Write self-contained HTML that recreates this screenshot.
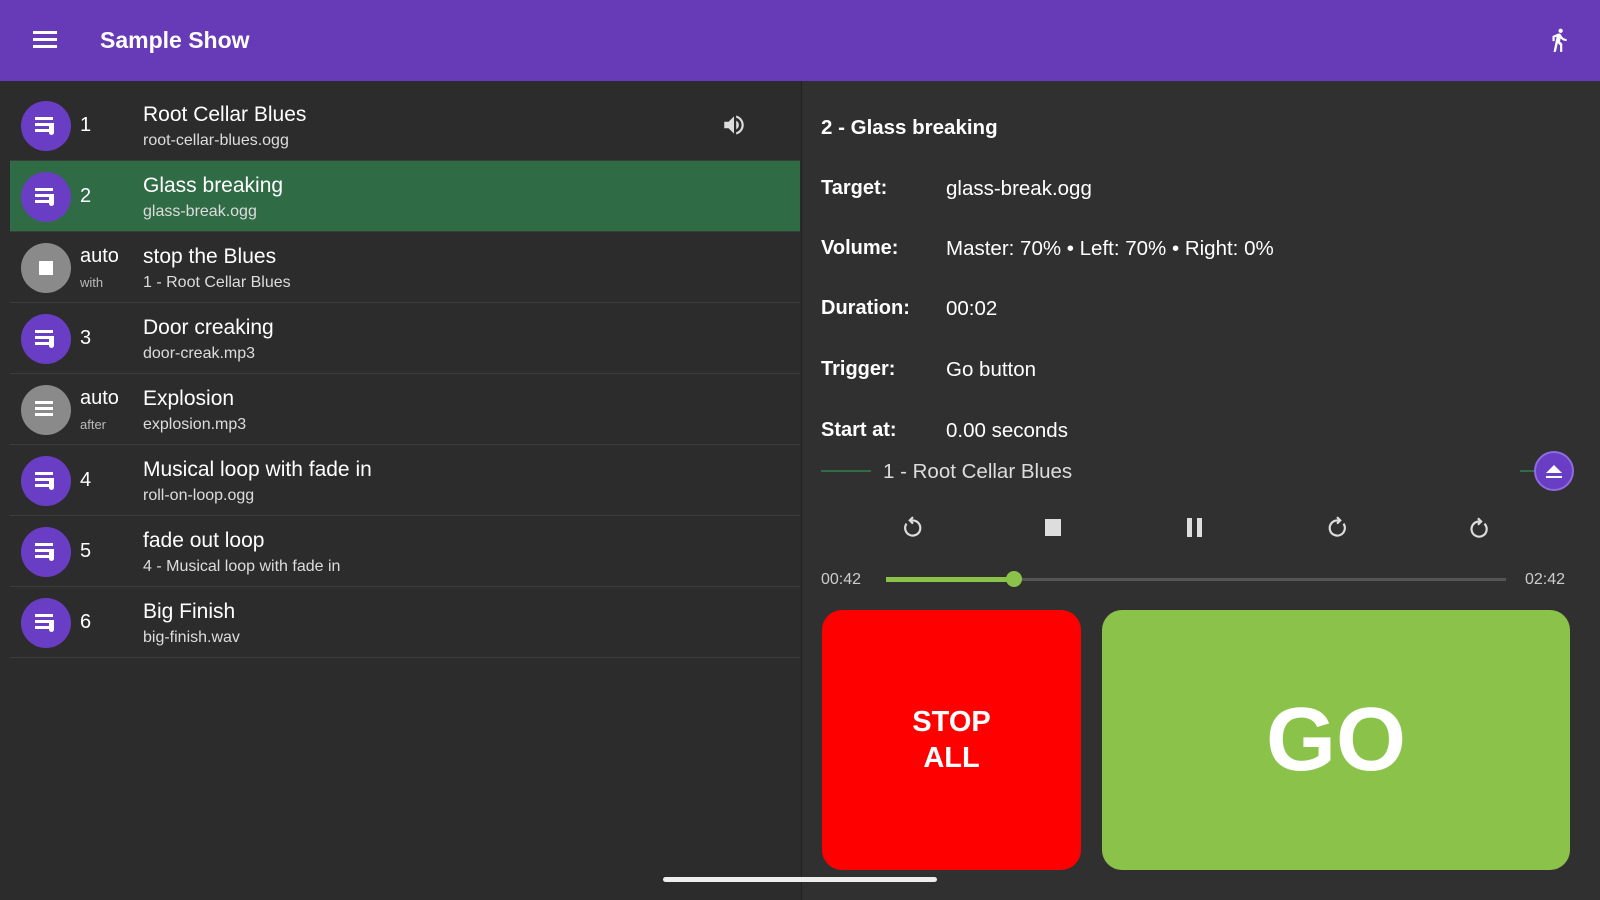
<!DOCTYPE html>
<html><head><style>
*{margin:0;padding:0;box-sizing:border-box}
body{width:1600px;height:900px;background:#303030;font-family:"Liberation Sans",sans-serif;color:#fff;position:relative;overflow:hidden}
.hdr{position:absolute;left:0;top:0;width:1600px;height:81px;background:#673ab7}
.hdr .t{position:absolute;left:100px;top:27px;font-size:23px;font-weight:bold}
.left{position:absolute;left:0;top:81px;width:801px;height:819px;background:#2c2c2c}
.row{position:absolute;left:10px;width:790px;height:71px;border-bottom:1px solid #3c3c3c}
.row.sel{background:#2f6b45}
.ic{position:absolute;left:11px;top:11px;width:50px;height:50px;border-radius:50%;background:#6a3ec4}
.ic.g{background:#8a8a8a}
.num{position:absolute;left:70px;top:24px;font-size:20px}
.num.a{top:13px}
.sub0{position:absolute;left:70px;top:43px;font-size:13px;color:#bbb}
.nm{position:absolute;left:133px;top:13px;font-size:21px}
.fn{position:absolute;left:133px;top:42px;font-size:16px;color:#ddd}
.lbl{position:absolute;left:821px;font-size:20px;font-weight:bold}
.val{position:absolute;left:946px;font-size:20.5px}
.ctl{position:absolute;top:515px}
.ic:not(.g)::before{content:"";position:absolute;left:14px;top:16px;width:18px;height:3px;background:#fff;box-shadow:0 6px 0 #fff,0 12px 0 #fff}.ic:not(.g)::after{content:"";position:absolute;left:28px;top:22px;width:5px;height:12px;background:#fff;border-radius:0 0 3px 3px}
.ic.g:not(:has(div))::before{content:"";position:absolute;left:14px;top:16px;width:18px;height:3px;background:#fff;box-shadow:0 6px 0 #fff,0 12px 0 #fff}
</style></head><body>
<div class="hdr">
<svg style="position:absolute;left:33px;top:29px" width="24" height="22"><rect y="2" width="24" height="3" fill="#fff"/><rect y="9" width="24" height="3" fill="#fff"/><rect y="16" width="24" height="3" fill="#fff"/></svg>
<div class="t">Sample Show</div>
<svg style="position:absolute;left:1546px;top:26px" width="26" height="28" viewBox="0 0 24 24"><path fill="#fff" d="M13.5 5.5c1.1 0 2-.9 2-2s-.9-2-2-2-2 .9-2 2 .9 2 2 2zM9.8 8.9L7 23h2.1l1.8-8 2.1 2v6h2v-7.5l-2.1-2 .6-3C14.8 12 16.8 13 19 13v-2c-1.9 0-3.5-1-4.3-2.4l-1-1.6c-.4-.6-1-1-1.7-1-.3 0-.5.1-.8.1L6 8.3V13h2V9.6l1.8-.7"/></svg>
</div>
<div class="left"></div>
<div class="row" style="top:90px"><div class="ic"></div><div class="num">1</div><div class="nm">Root Cellar Blues</div><div class="fn">root-cellar-blues.ogg</div>
<svg style="position:absolute;left:710px;top:22px" width="28" height="26" viewBox="0 0 24 24"><path fill="#ddd" d="M3 9v6h4l5 5V4L7 9H3zm13.5 3c0-1.8-1-3.3-2.5-4v8c1.5-.7 2.5-2.2 2.5-4zM14 3.2v2.1c2.9.9 5 3.5 5 6.7s-2.1 5.8-5 6.7v2.1c4-.9 7-4.5 7-8.8s-3-7.9-7-8.8z"/></svg></div>
<div class="row sel" style="top:161px"><div class="ic"></div><div class="num">2</div><div class="nm">Glass breaking</div><div class="fn">glass-break.ogg</div></div>
<div class="row" style="top:232px"><div class="ic g"><div style="position:absolute;left:18px;top:18px;width:14px;height:14px;background:#fff"></div></div><div class="num a">auto</div><div class="sub0">with</div><div class="nm">stop the Blues</div><div class="fn">1 - Root Cellar Blues</div></div>
<div class="row" style="top:303px"><div class="ic"></div><div class="num">3</div><div class="nm">Door creaking</div><div class="fn">door-creak.mp3</div></div>
<div class="row" style="top:374px"><div class="ic g"></div><div class="num a">auto</div><div class="sub0">after</div><div class="nm">Explosion</div><div class="fn">explosion.mp3</div></div>
<div class="row" style="top:445px"><div class="ic"></div><div class="num">4</div><div class="nm">Musical loop with fade in</div><div class="fn">roll-on-loop.ogg</div></div>
<div class="row" style="top:516px"><div class="ic"></div><div class="num">5</div><div class="nm">fade out loop</div><div class="fn">4 - Musical loop with fade in</div></div>
<div class="row" style="top:587px"><div class="ic"></div><div class="num">6</div><div class="nm">Big Finish</div><div class="fn">big-finish.wav</div></div>
<div style="position:absolute;left:801px;top:81px;width:1px;height:819px;background:#222"></div>
<div style="position:absolute;left:821px;top:116px;font-size:20.5px;font-weight:bold">2 - Glass breaking</div>
<div class="lbl" style="top:177px">Target:</div><div class="val" style="top:177px">glass-break.ogg</div>
<div class="lbl" style="top:237px">Volume:</div><div class="val" style="top:237px">Master: 70% • Left: 70% • Right: 0%</div>
<div class="lbl" style="top:297px">Duration:</div><div class="val" style="top:297px">00:02</div>
<div class="lbl" style="top:358px">Trigger:</div><div class="val" style="top:358px">Go button</div>
<div class="lbl" style="top:419px">Start at:</div><div class="val" style="top:419px">0.00 seconds</div>
<div style="position:absolute;left:821px;top:470px;width:50px;height:2px;background:#2f6b45"></div>
<div style="position:absolute;left:883px;top:460px;font-size:20.5px;color:#ddd">1 - Root Cellar Blues</div>
<div style="position:absolute;left:1520px;top:470px;width:15px;height:2px;background:#2f6b45"></div>
<div style="position:absolute;left:1534px;top:451px;width:40px;height:40px;border-radius:50%;background:#6a3ec4;border:2px solid #8d6be0"></div>
<div style="position:absolute;left:1546px;top:465px;width:0;height:0;border-left:8px solid transparent;border-right:8px solid transparent;border-bottom:8px solid #fff"></div>
<div style="position:absolute;left:1546px;top:476px;width:16px;height:2px;background:#fff"></div>
<svg class="ctl" style="left:900px" width="26" height="26" viewBox="0 0 24 24"><path fill="none" stroke="#ddd" stroke-width="2" d="M6 8a7 7 0 1 0 6-3h-2M12 2l-3 3 3 3"/></svg>
<div style="position:absolute;left:1045px;top:519px;width:16px;height:17px;background:#ddd"></div>
<div style="position:absolute;left:1187px;top:518px;width:5px;height:19px;background:#ddd"></div><div style="position:absolute;left:1197px;top:518px;width:5px;height:19px;background:#ddd"></div>
<svg class="ctl" style="left:1324px" width="26" height="26" viewBox="0 0 24 24"><path fill="none" stroke="#ddd" stroke-width="2" d="M18 8a7 7 0 1 1-6-3h2M12 2l3 3-3 3"/></svg>
<svg class="ctl" style="left:1466px" width="26" height="26" viewBox="0 0 24 24"><path fill="none" stroke="#ddd" stroke-width="2" d="M17 8a7 7 0 1 1-5-2h1M11 3l3 3-3 3"/></svg>
<div style="position:absolute;left:821px;top:571px;font-size:16px;color:#ccc">00:42</div>
<div style="position:absolute;left:1525px;top:571px;font-size:16px;color:#ccc">02:42</div>
<div style="position:absolute;left:886px;top:578px;width:620px;height:3px;background:#555"></div>
<div style="position:absolute;left:886px;top:577px;width:128px;height:5px;background:#8bc34a"></div>
<div style="position:absolute;left:1006px;top:571px;width:16px;height:16px;border-radius:50%;background:#8bc34a"></div>
<div style="position:absolute;left:822px;top:610px;width:259px;height:260px;background:#ff0000;border-radius:20px;display:flex;align-items:center;justify-content:center;text-align:center;font-size:29px;font-weight:bold;line-height:36px">STOP<br>ALL</div>
<div style="position:absolute;left:1102px;top:610px;width:468px;height:260px;background:#8bc34a;border-radius:20px;display:flex;align-items:center;justify-content:center;font-size:90px;font-weight:bold">GO</div>
<div style="position:absolute;left:663px;top:877px;width:274px;height:5px;border-radius:3px;background:#eee"></div>
</body></html>
